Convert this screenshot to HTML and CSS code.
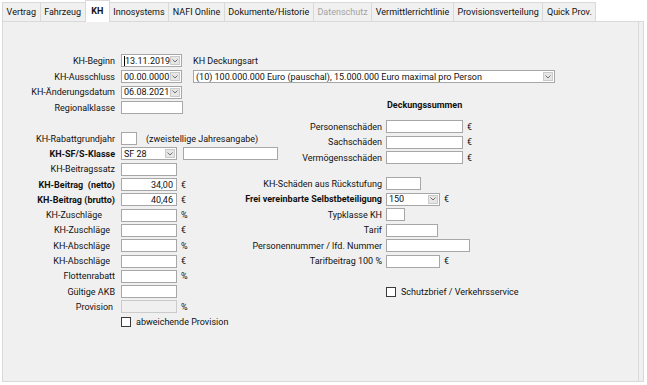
FILE: index.html
```html
<!DOCTYPE html>
<html lang="de">
<head>
    <meta charset="UTF-8">
    <title>KH</title>
    <link rel="stylesheet" href="styles.css">
</head>
<body>
    <div class="tabs">
        <div class="tab">Vertrag</div>
        <div class="tab">Fahrzeug</div>
        <div class="tab active">KH</div>
        <div class="tab">Innosystems</div>
        <div class="tab">NAFI Online</div>
        <div class="tab">Dokumente/Historie</div>
        <div class="tab off">Datenschutz</div>
        <div class="tab">Vermittlerrichtlinie</div>
        <div class="tab">Provisionsverteilung</div>
        <div class="tab">Quick Prov.</div>
    </div>

    <div class="panel">
        <div class="form">
            <div class="col-left">
                <div class="group top">
                    <div class="row">
                        <span class="lbl">KH-Beginn</span>
                        <div class="field combo f-date"><span class="caret"></span><span>13.11.2019</span><span class="btn"><svg width="6" height="4" viewBox="0 0 6 4"><path d="M0.5 0.5 L3 3 L5.5 0.5" fill="none" stroke="#707070"/></svg></span></div>
                    </div>
                    <div class="row">
                        <span class="lbl">KH-Ausschluss</span>
                        <div class="field combo f-date"><span>00.00.0000</span><span class="btn"><svg width="6" height="4" viewBox="0 0 6 4"><path d="M0.5 0.5 L3 3 L5.5 0.5" fill="none" stroke="#707070"/></svg></span></div>
                    </div>
                    <div class="row">
                        <span class="lbl">KH-Änderungsdatum</span>
                        <div class="field combo f-date"><span>06.08.2021</span><span class="btn"><svg width="6" height="4" viewBox="0 0 6 4"><path d="M0.5 0.5 L3 3 L5.5 0.5" fill="none" stroke="#707070"/></svg></span></div>
                    </div>
                    <div class="row">
                        <span class="lbl">Regionalklasse</span>
                        <div class="field f-region"></div>
                    </div>
                </div>

                <div class="group lower">
                    <div class="row">
                        <span class="lbl">KH-Rabattgrundjahr</span>
                        <div class="field f-year"></div>
                        <span class="hint">(zweistellige Jahresangabe)</span>
                    </div>
                    <div class="row">
                        <span class="lbl bold">KH-SF/S-Klasse</span>
                        <div class="field combo f-short"><span>SF 28</span><span class="btn"><svg width="6" height="4" viewBox="0 0 6 4"><path d="M0.5 0.5 L3 3 L5.5 0.5" fill="none" stroke="#707070"/></svg></span></div>
                        <div class="field f-extra"></div>
                    </div>
                    <div class="row">
                        <span class="lbl">KH-Beitragssatz</span>
                        <div class="field f-short"></div>
                    </div>
                    <div class="row">
                        <span class="lbl bold">KH-Beitrag &nbsp;(netto)</span>
                        <div class="field num f-short">34,00</div>
                        <span class="unit">€</span>
                    </div>
                    <div class="row">
                        <span class="lbl bold">KH-Beitrag (brutto)</span>
                        <div class="field num f-short">40,46</div>
                        <span class="unit">€</span>
                    </div>
                    <div class="row">
                        <span class="lbl pad-lg">KH-Zuschläge</span>
                        <div class="field f-short"></div>
                        <span class="unit">%</span>
                    </div>
                    <div class="row">
                        <span class="lbl pad-md">KH-Zuschläge</span>
                        <div class="field f-short"></div>
                        <span class="unit">€</span>
                    </div>
                    <div class="row">
                        <span class="lbl pad-md">KH-Abschläge</span>
                        <div class="field f-short"></div>
                        <span class="unit">%</span>
                    </div>
                    <div class="row">
                        <span class="lbl pad-md">KH-Abschläge</span>
                        <div class="field f-short"></div>
                        <span class="unit">€</span>
                    </div>
                    <div class="row">
                        <span class="lbl">Flottenrabatt</span>
                        <div class="field f-short"></div>
                        <span class="unit">%</span>
                    </div>
                    <div class="row">
                        <span class="lbl">Gültige AKB</span>
                        <div class="field f-short"></div>
                    </div>
                    <div class="row">
                        <span class="lbl pad-sm">Provision</span>
                        <div class="field disabled f-short"></div>
                        <span class="unit">%</span>
                    </div>
                    <div class="row check-row">
                        <span class="check"></span>
                        <span>abweichende Provision</span>
                    </div>
                </div>
            </div>

            <div class="col-right">
                <div class="group top">
                    <div class="row">KH Deckungsart</div>
                    <div class="row">
                        <div class="field combo f-wide"><span>(10) 100.000.000 Euro (pauschal), 15.000.000 Euro maximal pro Person</span><span class="btn"><svg width="6" height="4" viewBox="0 0 6 4"><path d="M0.5 0.5 L3 3 L5.5 0.5" fill="none" stroke="#707070"/></svg></span></div>
                    </div>
                </div>

                <div class="row sums-head">Deckungssummen</div>

                <div class="group sums">
                    <div class="row">
                        <span class="lbl">Personenschäden</span>
                        <div class="field f-sum"></div>
                        <span class="unit">€</span>
                    </div>
                    <div class="row">
                        <span class="lbl">Sachschäden</span>
                        <div class="field f-sum"></div>
                        <span class="unit">€</span>
                    </div>
                    <div class="row">
                        <span class="lbl">Vermögensschäden</span>
                        <div class="field f-sum"></div>
                        <span class="unit">€</span>
                    </div>
                </div>

                <div class="group extra">
                    <div class="row">
                        <span class="lbl">KH-Schäden aus Rückstufung</span>
                        <div class="field f-xs"></div>
                    </div>
                    <div class="row">
                        <span class="lbl bold">Frei vereinbarte Selbstbeteiligung</span>
                        <div class="field combo f-mid"><span>150</span><span class="btn"><svg width="6" height="4" viewBox="0 0 6 4"><path d="M0.5 0.5 L3 3 L5.5 0.5" fill="none" stroke="#707070"/></svg></span></div>
                        <span class="unit">€</span>
                    </div>
                    <div class="row">
                        <span class="lbl">Typklasse KH</span>
                        <div class="field f-tiny"></div>
                    </div>
                    <div class="row">
                        <span class="lbl">Tarif</span>
                        <div class="field f-tarif"></div>
                    </div>
                    <div class="row">
                        <span class="lbl">Personennummer / lfd. Nummer</span>
                        <div class="field f-pnr"></div>
                    </div>
                    <div class="row">
                        <span class="lbl">Tarifbeitrag 100 %</span>
                        <div class="field f-mid"></div>
                        <span class="unit">€</span>
                    </div>
                </div>

                <div class="row check-row schutz">
                    <span class="check"></span>
                    <span>Schutzbrief / Verkehrsservice</span>
                </div>
            </div>
        </div>
    </div>
</body>
</html>
```

FILE: styles.css
```css
body {
    margin: 0;
    width: 647px;
    height: 385px;
    overflow: hidden;
    background: #ffffff;
    font-family: Roboto, "Open Sans", sans-serif;
    font-size: 9px;
    color: #111111;
}

/* tab strip */
.tabs {
    display: flex;
    align-items: flex-end;
    height: 21px;
    padding-left: 2px;
}
.tab {
    height: 19px;
    box-sizing: border-box;
    padding: 0 3.6px;
    border: 1px solid #d9d9d9;
    border-bottom: none;
    margin-right: -1px;
    background: #f0f0f0;
    line-height: 18px;
    white-space: nowrap;
}
.tab.active {
    position: relative;
    z-index: 1;
    height: 22px;
    margin-bottom: -1px;
    padding: 0 5.5px;
    background: #ffffff;
    font-weight: 700;
    line-height: 20px;
}
.tab.off {
    color: #a3a3a3;
}

/* page body */
.panel {
    margin-left: 2px;
    width: 642px;
    height: 361px;
    box-sizing: border-box;
    border: 1px solid #d9d9d9;
    background: #f0f0f0;
}
.form {
    display: flex;
    height: 100%;
    margin-right: 4px;
    padding-top: 31px;
    box-sizing: border-box;
    border-right: 1px solid #dadada;
}
.col-left {
    flex: none;
    width: 190px;
}
.col-right {
    flex: none;
    width: 300px;
}

.row {
    display: flex;
    align-items: center;
    height: 15.3px;
    white-space: nowrap;
}
.top .row {
    height: 15.7px;
}
.col-right .row {
    height: 15.5px;
}
.col-right .top .row {
    height: 15.7px;
}
.lower {
    margin-top: 15.3px;
}

.lbl {
    flex: none;
    width: 112px;
    margin-right: 6px;
    text-align: right;
}
.col-right .lbl {
    width: 189px;
    margin-right: 4px;
}
.lbl.pad-lg { padding-right: 13px; box-sizing: border-box; }
.lbl.pad-md { padding-right: 5px; box-sizing: border-box; }
.lbl.pad-sm { padding-right: 2px; box-sizing: border-box; }
.bold {
    font-weight: 700;
}

/* inputs */
.field {
    flex: none;
    display: flex;
    align-items: center;
    height: 13px;
    box-sizing: border-box;
    padding: 0 2px;
    border: 1px solid #a7a7a7;
    background: #ffffff;
    overflow: hidden;
}
.field.num {
    justify-content: flex-end;
    padding-right: 3px;
}
.field.disabled {
    background: #f0f0f0;
    border-color: #cbcbcb;
}
.combo .btn {
    display: flex;
    align-items: center;
    justify-content: center;
    width: 10px;
    height: 9px;
    margin-left: auto;
    margin-right: -1px;
    box-sizing: border-box;
    border: 1px solid #cacaca;
    background: #e6e6e6;
}
.caret {
    width: 1px;
    height: 10px;
    background: #000000;
}

.f-date { width: 61px; }
.f-region { width: 62px; }
.f-year { width: 16px; }
.f-short { width: 56px; }
.f-extra { width: 95px; margin-left: 6px; }
.f-wide { width: 362px; }
.f-sum { width: 77px; }
.f-xs { width: 35px; }
.f-mid { width: 54px; }
.f-tiny { width: 19px; }
.f-tarif { width: 52px; }
.f-pnr { width: 84px; }

.unit {
    margin-left: 4px;
}
.hint {
    margin-left: 9px;
}

.check {
    flex: none;
    width: 10px;
    height: 10px;
    margin-right: 5px;
    box-sizing: border-box;
    border: 1px solid #3a3a3a;
    background: #ffffff;
}
.col-left .check-row {
    padding-left: 118px;
}

/* right side blocks */
.sums-head {
    margin-top: 12.6px;
    padding-left: 194px;
    font-weight: 700;
}
.sums {
    margin-top: 6.5px;
}
.extra {
    margin-top: 10.5px;
}
.schutz {
    margin-top: 15.5px;
    padding-left: 193px;
}
```
